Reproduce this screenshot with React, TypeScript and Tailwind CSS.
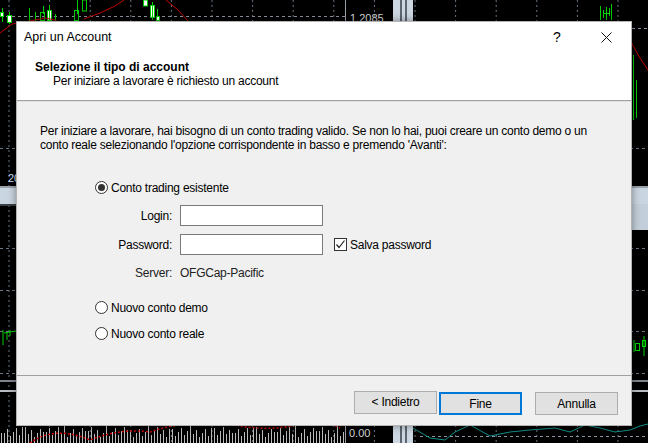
import React, { useState } from 'react';

const font = { fontFamily: '"Liberation Sans", Arial, sans-serif' };

// sfondo del grafico (disegno) dietro la finestra
const ChartBackground = () => {
    const vLines = Array.from({ length: 16 }, (_, i) => 9 + i * 40.6);
    const bars = Array.from({ length: 115 }, (_, i) => {
        const h = 6 + ((i * 37) % 11) + (i % 7 === 0 ? 4 : 0);
        return { x: 1 + i * 3, h };
    });
    return (
        <svg width="648" height="443" className="absolute left-0 top-0" viewBox="0 0 648 443">
            <rect width="648" height="443" fill="#000" />
            {vLines.map((x) => (
                <line key={x} x1={x} y1="0" x2={x} y2="443" stroke="#6b7684" strokeDasharray="2 3" strokeWidth="1" />
            ))}
            <line x1="0" y1="16.5" x2="345" y2="16.5" stroke="#8a94a0" strokeDasharray="3 3" />
            <line x1="0" y1="148.5" x2="648" y2="148.5" stroke="#6b7684" strokeDasharray="3 3" />
            <line x1="0" y1="248.5" x2="648" y2="248.5" stroke="#6b7684" strokeDasharray="3 3" />
            <line x1="0" y1="290.5" x2="648" y2="290.5" stroke="#6b7684" strokeDasharray="3 3" />
            <line x1="0" y1="331.5" x2="648" y2="331.5" stroke="#6b7684" strokeDasharray="3 3" />
            <line x1="0" y1="373.5" x2="648" y2="373.5" stroke="#6b7684" strokeDasharray="3 3" />
            <line x1="420" y1="436.5" x2="648" y2="436.5" stroke="#8a94a0" strokeDasharray="3 3" />
            <line x1="632" y1="28.5" x2="648" y2="28.5" stroke="#8a94a0" strokeDasharray="3 3" />

            {/* separatori dei pannelli */}
            <rect x="0" y="186" width="648" height="2" fill="#9aa0a8" />
            <rect x="0" y="188" width="648" height="16" fill="#c9d5e0" />
            <rect x="0" y="204" width="648" height="2" fill="#3a3f44" />
            <rect x="631" y="204" width="17" height="26" fill="#c2ced9" />
            <rect x="0" y="380" width="648" height="2" fill="#7e858c" />
            <rect x="0" y="390" width="648" height="2" fill="#b8bcc0" />
            <line x1="345.5" y1="0" x2="345.5" y2="443" stroke="#9aa0a8" />
            <rect x="393" y="0" width="20" height="443" fill="#cdd7e1" />
            <rect x="400" y="0" width="2" height="443" fill="#5d6670" />
            <rect x="405" y="0" width="2" height="443" fill="#5d6670" />
            <text x="8" y="182" fill="#cfe3ff" fontSize="11" style={font}>20</text>
            <text x="350" y="22" fill="#d6d6d6" fontSize="11" style={font}>1.2085</text>
            <text x="349" y="437" fill="#d6d6d6" fontSize="11" style={font}>0.00</text>

            {/* candele in alto */}
            <g stroke="#00d000" strokeWidth="1" fill="#fff">
                <line x1="2.5" y1="8" x2="2.5" y2="22" />
                <rect x="0.5" y="12.5" width="3" height="4" />
                <line x1="9.5" y1="12" x2="9.5" y2="24" />
                <rect x="7.5" y="15.5" width="4" height="7" />
                <line x1="29.5" y1="8" x2="29.5" y2="22" />
                <line x1="35.5" y1="12" x2="35.5" y2="22" />
                <rect x="40.5" y="12.5" width="4" height="8" fill="none" />
                <line x1="43.5" y1="6" x2="43.5" y2="14" />
                <rect x="47.5" y="10.5" width="4" height="10" />
                <line x1="49.5" y1="5" x2="49.5" y2="22" />
                <line x1="55.5" y1="14" x2="55.5" y2="22" />
                <rect x="74.5" y="10.5" width="4" height="10" fill="none" />
                <line x1="77.5" y1="0" x2="77.5" y2="14" />
                <rect x="82.5" y="0" width="4" height="11" fill="none" />
                <rect x="143.5" y="0" width="4" height="6" />
                <rect x="150.5" y="5.5" width="4" height="12" />
                <line x1="152.5" y1="2" x2="152.5" y2="20" />
                <line x1="157.5" y1="9" x2="157.5" y2="22" />
                <rect x="156.5" y="16.5" width="3" height="4" />
                <line x1="600.5" y1="6" x2="600.5" y2="20" />
                <line x1="603.5" y1="10" x2="603.5" y2="18" />
                <line x1="606.5" y1="7" x2="606.5" y2="20" />
                <line x1="609.5" y1="8" x2="609.5" y2="16" />
                <line x1="611.5" y1="4" x2="611.5" y2="20" />
                <line x1="604" y1="13.5" x2="610" y2="13.5" />
                <line x1="633.5" y1="55" x2="633.5" y2="120" />
                <line x1="636.5" y1="80" x2="636.5" y2="118" />
                <line x1="634" y1="340" x2="634" y2="352" />
                <rect x="635.5" y="343.5" width="4" height="7" fill="none" />
                <rect x="642.5" y="340.5" width="3" height="6" fill="none" />
                <line x1="644" y1="336" x2="644" y2="356" />
                <line x1="3" y1="330" x2="3" y2="345" />
                <line x1="7" y1="332" x2="7" y2="340" />
                <line x1="10" y1="330" x2="10" y2="336" />
                <line x1="4" y1="333" x2="16" y2="331" />
            </g>
            <path d="M0 33 L12 24 L25 22 L45 18 L55 20 L62 24" stroke="#c00000" fill="none" strokeWidth="1" />
            <path d="M84 19 L100 13 L115 6 L124 0" stroke="#c00000" fill="none" strokeWidth="1" />
            <path d="M166 0 L178 10 L188 21" stroke="#c00000" fill="none" strokeWidth="1" />
            <path d="M631 42 L640 58 L648 70" stroke="#c00000" fill="none" strokeWidth="1" />

            {/* volumi in basso */}
            <g fill="#bdbdbd">
                {bars.map((b) => (
                    <rect key={b.x} x={b.x} y={443 - b.h} width="1" height={b.h} />
                ))}
            </g>
            <path d="M30 443 Q55 425 90 440 Q120 428 150 432 Q190 418 235 425 Q270 432 300 424 Q320 418 340 428" stroke="#d00000" fill="none" strokeDasharray="2 2" strokeWidth="1.5" />
            <path d="M413 428 L430 438 L445 440 L455 432 L470 425 L490 436 L510 432 L530 430 L555 428 L570 432 L585 425 L600 428 L615 432 L630 430 L640 426 L648 424" stroke="#11908a" fill="none" strokeWidth="1" />
        </svg>
    );
};

const Radio = ({ checked, label, onClick }: { checked: boolean; label: string; onClick: () => void }) => (
    <div className="flex items-center h-[15px] cursor-default" onClick={onClick}>
        <span className="w-[13px] h-[13px] rounded-full border border-[#333] bg-white flex items-center justify-center">
            {checked && <span className="w-[7px] h-[7px] rounded-full bg-[#333]" />}
        </span>
        <span className="ml-[3px] text-[12px] tracking-[-0.25px] text-black">{label}</span>
    </div>
);

const WinButton = ({ label, primary }: { label: string; primary?: boolean }) => (
    <button
        type="button"
        className={`h-[23px] w-[83px] bg-[#e1e1e1] text-[12px] tracking-[-0.25px] text-black ${primary ? 'border-2 border-[#0078d7]' : 'border border-[#adadad]'}`}
    >
        {label}
    </button>
);

const App = () => {
    const [accountType, setAccountType] = useState('existing');
    const [savePassword, setSavePassword] = useState(true);

    return (
        <div className="relative w-[648px] h-[443px] overflow-hidden bg-black" style={font}>
            <ChartBackground />

            <div className="absolute left-[16px] top-[21px] w-[616px] h-[405px] flex flex-col border border-[#b4b4b4] bg-white shadow-[0_0_8px_rgba(0,0,0,0.4)]">
                {/* barra del titolo */}
                <div className="h-[30px] flex items-center pl-[7px]">
                    <span className="text-[12.5px] text-black">Apri un Account</span>
                    <span className="ml-auto text-[14px] text-black w-[10px] text-center">?</span>
                    <svg width="11" height="11" viewBox="0 0 11 11" className="ml-[39px] mr-[19px]">
                        <path d="M0.5 0.5 L10.5 10.5 M10.5 0.5 L0.5 10.5" stroke="#111" strokeWidth="1" />
                    </svg>
                </div>

                {/* intestazione */}
                <div className="h-[48px] pl-[18px] pt-[8px]">
                    <p className="text-[12px] leading-[15px] font-bold text-black">Selezione il tipo di account</p>
                    <p className="pl-[18px] text-[12px] leading-[13px] tracking-[-0.25px] text-black">Per iniziare a lavorare è richiesto un account</p>
                </div>
                <div className="h-px bg-[#a0a0a0]" />
                <div className="h-px bg-[#e3e3e3]" />

                {/* corpo */}
                <div className="flex-1 flex flex-col bg-[#f0f0f0]">
                    <p className="mt-[22px] pl-[23px] text-[12px] leading-[14px] tracking-[-0.25px] text-black">
                        Per iniziare a lavorare, hai bisogno di un conto trading valido. Se non lo hai, puoi creare un conto demo o un
                        <br />
                        conto reale selezionando l'opzione corrispondente in basso e premendo 'Avanti':
                    </p>

                    <div className="mt-[28px] pl-[78px]">
                        <Radio checked={accountType === 'existing'} label="Conto trading esistente" onClick={() => setAccountType('existing')} />

                        <div className="mt-[10px] flex items-center">
                            <span className="w-[77px] text-right text-[12px] tracking-[-0.25px] text-black">Login:</span>
                            <input type="text" className="ml-[8px] w-[143px] h-[21px] bg-white border border-[#7a7a7a] outline-none px-1 text-[12px]" />
                        </div>
                        <div className="mt-[8px] flex items-center">
                            <span className="w-[77px] text-right text-[12px] tracking-[-0.25px] text-black">Password:</span>
                            <input type="password" className="ml-[8px] w-[143px] h-[21px] bg-white border border-[#7a7a7a] outline-none px-1 text-[12px]" />
                            <div className="ml-[11px] flex items-center" onClick={() => setSavePassword(!savePassword)}>
                                <span className="w-[13px] h-[13px] border border-[#333] bg-white flex items-center justify-center">
                                    {savePassword && (
                                        <svg width="11" height="11" viewBox="0 0 11 11">
                                            <path d="M1.5 5.5 L4 8.5 L9.5 1.5" stroke="#222" strokeWidth="1.2" fill="none" />
                                        </svg>
                                    )}
                                </span>
                                <span className="ml-[3px] text-[12px] tracking-[-0.25px] text-black">Salva password</span>
                            </div>
                        </div>
                        <div className="mt-[10px] flex items-center h-[15px]">
                            <span className="w-[77px] text-right text-[12px] tracking-[-0.25px] text-[#222]">Server:</span>
                            <span className="ml-[8px] text-[12px] tracking-[-0.25px] text-[#222]">OFGCap-Pacific</span>
                        </div>

                        <div className="mt-[20px]">
                            <Radio checked={accountType === 'demo'} label="Nuovo conto demo" onClick={() => setAccountType('demo')} />
                        </div>
                        <div className="mt-[11px]">
                            <Radio checked={accountType === 'real'} label="Nuovo conto reale" onClick={() => setAccountType('real')} />
                        </div>
                    </div>

                    {/* pulsanti */}
                    <div className="mt-auto border-t border-[#a0a0a0] pt-[15px] pb-[10px] pr-[13px] flex justify-end">
                        <WinButton label="< Indietro" />
                        <div className="ml-[2px]">
                            <WinButton label="Fine" primary />
                        </div>
                        <div className="ml-[13px]">
                            <WinButton label="Annulla" />
                        </div>
                    </div>
                </div>
            </div>
        </div>
    );
};

export default App;
